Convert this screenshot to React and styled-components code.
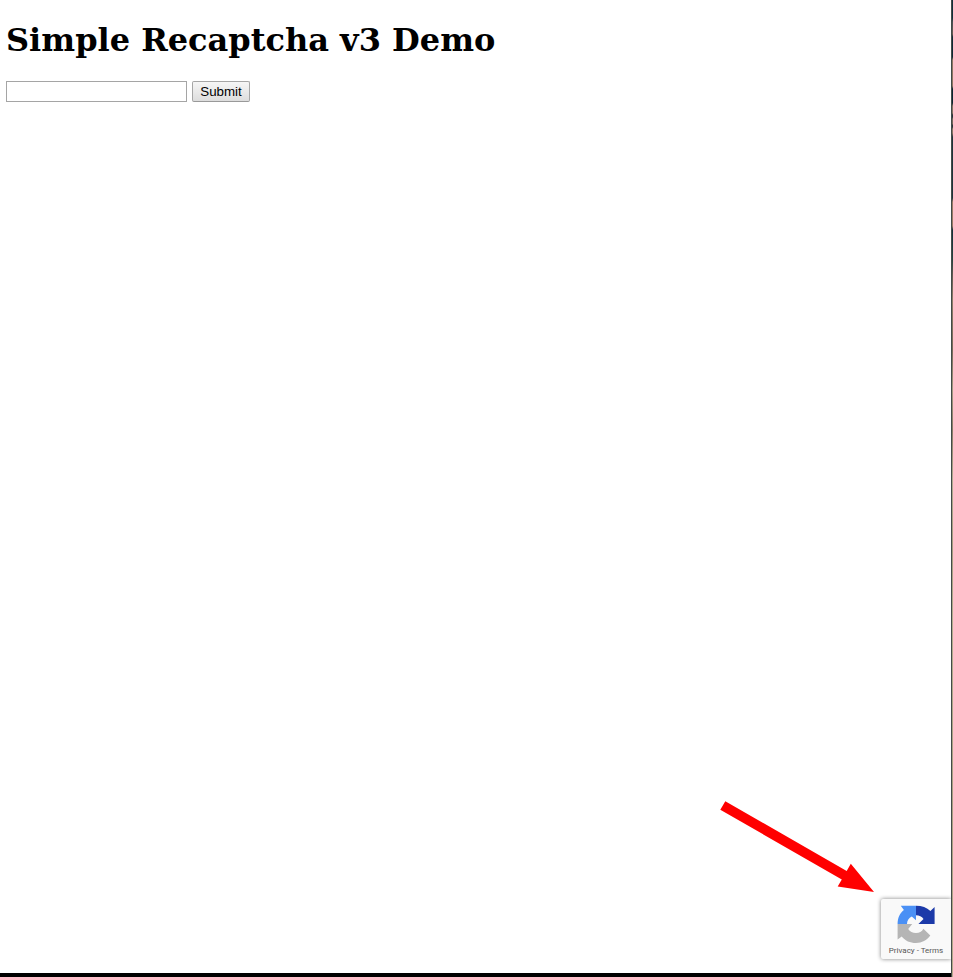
import React from "react";
import styled, { createGlobalStyle } from "styled-components";

const GlobalStyle = createGlobalStyle`
  body { margin: 0; background: #fff; overflow: hidden; }
`;

const Screen = styled.div`
  display: grid;
  grid-template-columns: 951px 1px 1px;
  width: 953px;
  height: 977px;
`;

const Browser = styled.div`
  position: relative;
  display: grid;
  grid-template-rows: 973px 4px;
  overflow: hidden;
`;

const Page = styled.main`
  padding: 21px 6px 0;
  background: #fff;
`;

const Title = styled.h1`
  margin: 0;
  height: 60px;
  font: bold 32px/38px "DejaVu Serif", serif;
  color: #000;
  white-space: nowrap;
`;

const Form = styled.form`
  display: flex;
  gap: 5px;
`;

const TextInput = styled.input`
  box-sizing: border-box;
  width: 181px;
  height: 21px;
  padding: 1px;
  border: 1px solid #a5a5a5;
  border-radius: 0;
  background: #fff;
`;

const SubmitButton = styled.button`
  box-sizing: border-box;
  width: 58px;
  height: 21px;
  padding: 0;
  border: 1px solid #a6a6a6;
  border-bottom-color: #999;
  border-radius: 2px;
  background: linear-gradient(#f6f6f6, #dddddd);
  font: 13.333px/19px "Liberation Sans", Arial, sans-serif;
  color: #000;
`;

const BottomEdge = styled.div`
  background: #000;
`;

const WindowBorder = styled.div`
  background: #444a49;
`;

const DesktopSliver = styled.div`
  background: linear-gradient(
    #12303a 0 18px, #485052 22px, #665b51 34px, #102a34 37px 57px,
    #8e7661 60px 86px, #0c2530 89px 103px, #84705f 106px 113px,
    #263239 115px 117px, #75675a 119px 124px, #29353a 125px 127px,
    #8a7563 129px 133px, #20343a 137px 198px, #997a64 202px 226px,
    #14303a 230px, #28453f 260px, #625a50 275px, #8e7d67 300px,
    #796a58 350px, #a49a81 390px, #8a7c66 430px, #b1aa8f 480px,
    #a69c7f 550px, #b4ad8e 620px, #a99e81 800px, #b5aa8b 977px
  );
`;

const Badge = styled.aside`
  position: absolute;
  left: 881px;
  top: 899px;
  box-sizing: border-box;
  width: 70px;
  height: 60px;
  padding-top: 6px;
  background: #f9f9f9;
  border-radius: 2px 0 0 2px;
  box-shadow: 0 0 4px 0 #808080;
  display: flex;
  flex-direction: column;
  align-items: center;
`;

const Logo = styled.svg`
  display: block;
  width: 38px;
  height: 38px;
  flex: none;
`;

const Legal = styled.div`
  margin-top: 3px;
  font: 8px/10px Roboto, sans-serif;
  color: #555;
  white-space: pre;
`;

const Arrow = styled.svg`
  position: absolute;
  left: 710px;
  top: 790px;
  width: 180px;
  height: 110px;
`;

export default function App() {
  return (
    <>
      <GlobalStyle />
      <Screen>
        <Browser>
          <Page>
            <Title>Simple Recaptcha v3 Demo</Title>
            <Form onSubmit={(e) => e.preventDefault()}>
              <TextInput type="text" />
              <SubmitButton type="submit">Submit</SubmitButton>
            </Form>
          </Page>
          <BottomEdge />
          <Badge>
            <Logo viewBox="0 0 38 38">
              <path fill="#4a90f5" d="M3.8 .8H19V15.2L14.8 11.4C11.8 12.8 10.1 15.2 10 19H.6C.6 13 2.7 8.2 6.9 4.9Z" />
              <path fill="#1c3aa9" d="M19 .8C25 .8 29.8 2.4 33.4 6.1L37.6 2V19H21.4L26.5 14C24.8 11.4 22.3 10.2 19 10.2Z" />
              <path fill="#b5b5b5" d="M.6 19H15.2L11.2 23.9C12.9 26.7 15.5 28 19 28C22.4 28 24.8 26.6 26.4 23.7L33.3 30.5C29.7 35.4 25 37.9 19 37.9C13 37.9 8.3 35.8 4.7 31.4L.6 34.6Z" />
            </Logo>
            <Legal>Privacy - Terms</Legal>
          </Badge>
          <Arrow viewBox="0 0 180 110">
            <path fill="#f00" d="M15.3 11.2 136.7 81 140.8 73.7 164 102 127.7 96.5 131.8 89.5 10.3 19.7Z" />
          </Arrow>
        </Browser>
        <WindowBorder />
        <DesktopSliver />
      </Screen>
    </>
  );
}
